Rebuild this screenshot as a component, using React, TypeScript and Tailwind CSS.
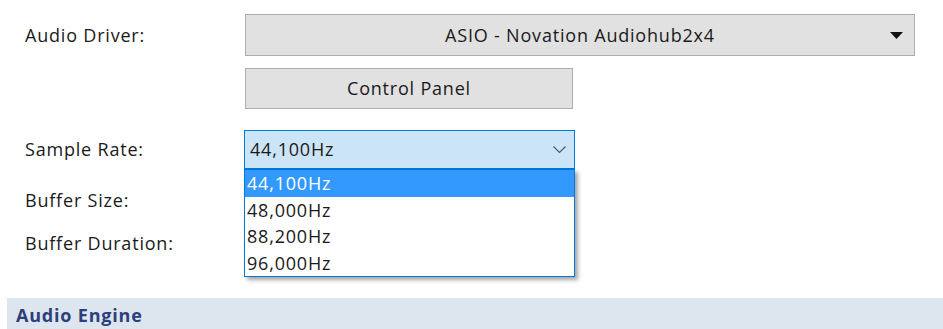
const rates = ['44,100Hz', '48,000Hz', '88,200Hz', '96,000Hz'];

export default function App() {
  return (
    <div className="w-[943px] h-[329px] bg-white overflow-hidden text-[18px] tracking-[0.8px] text-[#1a1a1a] font-['Segoe_UI','Open_Sans',sans-serif]">
      {/* driver */}
      <div className="flex items-center pt-[14px]">
        <div className="w-[245px] pl-[25px]">Audio Driver:</div>
        <div className="relative flex items-center justify-center w-[670px] h-[42px] bg-[#e1e1e1] border border-[#adadad]">
          <span>ASIO - Novation Audiohub2x4</span>
          <svg className="absolute right-[11px] top-[17px]" width="13" height="8" viewBox="0 0 13 8">
            <path d="M0 0 H13 L6.5 7 Z" fill="#111" />
          </svg>
        </div>
      </div>

      <div className="flex pl-[245px] pt-[12px]">
        <button className="w-[328px] h-[41px] bg-[#e1e1e1] border border-[#adadad] tracking-[0.8px]">Control Panel</button>
      </div>

      {/* sample rate */}
      <div className="flex items-center pt-[21px]">
        <div className="w-[244px] pl-[25px]">Sample Rate:</div>
        <div className="relative">
          <div className="flex items-center justify-between w-[331px] h-[39px] pl-[5px] pr-[8px] bg-[#cce4f7] border border-[#0078d7]">
            <span>44,100Hz</span>
            <svg width="13" height="8" viewBox="0 0 13 8">
              <path d="M0.5 0.5 L6.5 6.5 L12.5 0.5" fill="none" stroke="#555" strokeWidth="1.1" />
            </svg>
          </div>
          <ul className="absolute left-0 top-[39px] z-10 w-[331px] bg-white border border-[#0078d7] shadow-[3px_3px_4px_rgba(0,0,0,0.35)]">
            {rates.map((r, i) => (
              <li
                key={r}
                className={`h-[26.5px] leading-[26.5px] pl-[2px] ${i === 0 ? 'bg-[#3399ff] text-white' : ''}`}
              >
                {r}
              </li>
            ))}
          </ul>
        </div>
      </div>

      <div className="pl-[25px] pt-[19px] leading-[24px]">Buffer Size:</div>
      <div className="pl-[25px] pt-[19px] leading-[24px]">Buffer Duration:</div>

      <div className="ml-[7px] mt-[43px] h-[40px] bg-[#dde6ee] pl-[9px] pt-[4px] font-bold text-[#2d3f7c]">
        Audio Engine
      </div>
    </div>
  );
}
